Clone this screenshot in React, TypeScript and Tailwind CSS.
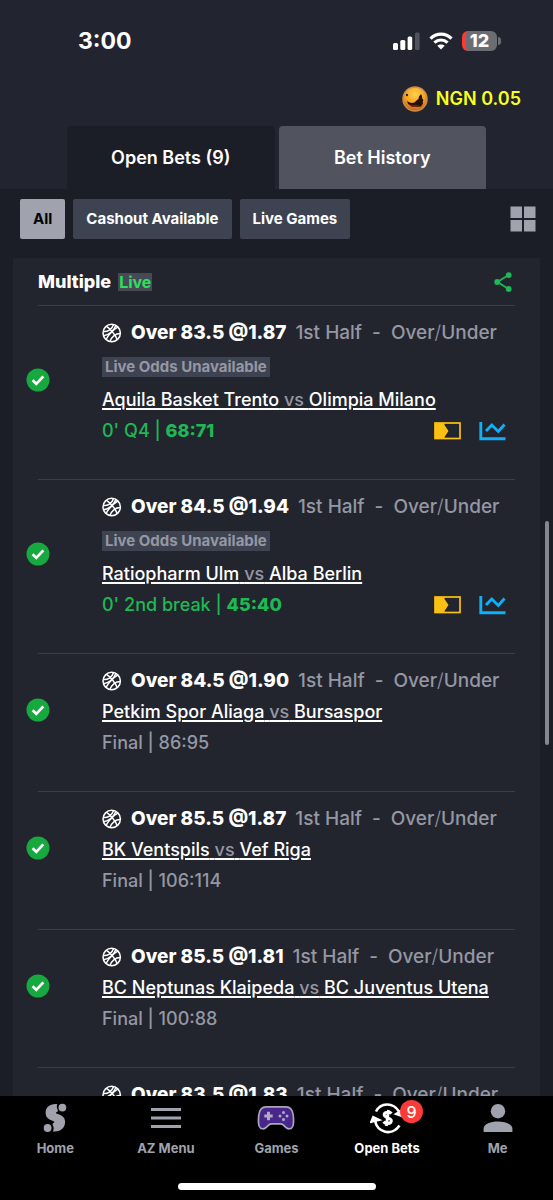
import { Fragment } from 'react';
import type { ReactNode } from 'react';

interface Match {
  home: string;
  away: string;
  status: string;
  score: string;
  live?: boolean;
}

interface Bet {
  pick: string;
  odds: string;
  match?: Match;
}

interface NavItem {
  label: string;
  icon: ReactNode;
  active?: boolean;
  badge?: number;
}

const filters = ['All', 'Cashout Available', 'Live Games'];

const bets: Bet[] = [
  { pick: 'Over 83.5', odds: '1.87', match: { home: 'Aquila Basket Trento', away: 'Olimpia Milano', status: "0' Q4", score: '68:71', live: true } },
  { pick: 'Over 84.5', odds: '1.94', match: { home: 'Ratiopharm Ulm', away: 'Alba Berlin', status: "0' 2nd break", score: '45:40', live: true } },
  { pick: 'Over 84.5', odds: '1.90', match: { home: 'Petkim Spor Aliaga', away: 'Bursaspor', status: 'Final', score: '86:95' } },
  { pick: 'Over 85.5', odds: '1.87', match: { home: 'BK Ventspils', away: 'Vef Riga', status: 'Final', score: '106:114' } },
  { pick: 'Over 85.5', odds: '1.81', match: { home: 'BC Neptunas Klaipeda', away: 'BC Juventus Utena', status: 'Final', score: '100:88' } },
  { pick: 'Over 83.5', odds: '1.83' },
];

function SignalIcon() {
  return (
    <svg width="27" height="18" viewBox="0 0 27 18" fill="#fff">
      <rect x="0" y="11" width="5" height="7" rx="1.5" />
      <rect x="7.3" y="8" width="5" height="10" rx="1.5" />
      <rect x="14.6" y="4.5" width="4.6" height="13.5" rx="1.5" />
      <rect x="22" y="0.5" width="4.6" height="17.5" rx="1.5" fill="#50535b" />
    </svg>
  );
}

function WifiIcon() {
  return (
    <svg width="24" height="18" viewBox="0 0 24 18">
      <g fill="none" stroke="#fff" strokeWidth="3.2">
        <path d="M1.5 6.6C7.4.6 16.6.6 22.5 6.6" />
        <path d="M5.4 10.7C9.2 7.1 14.8 7.1 18.6 10.7" />
      </g>
      <path d="M12 17.6 8.3 13.8C10.4 12 13.6 12 15.7 13.8Z" fill="#fff" />
    </svg>
  );
}

function CoinIcon() {
  return (
    <svg width="26" height="26" viewBox="0 0 26 26">
      <defs>
        <radialGradient id="coin" cx="0.5" cy="0.3" r="0.65">
          <stop offset="0" stopColor="#ffd24a" />
          <stop offset="0.65" stopColor="#f5a01f" />
          <stop offset="1" stopColor="#c46a1c" />
        </radialGradient>
      </defs>
      <circle cx="13" cy="13" r="12" fill="url(#coin)" stroke="#d08a4b" strokeWidth="1.5" />
      <path d="m5 14.500 1.500 1.500 3 1 3-.5 2.500-2.500 1.500-1 .5-2.500 2-2.500 1 2 .2 2.500 1.300 1.500-.8 1.500.3 2-2 3L14 21l-4-.5-4-2.500Z" fill="#241006" />
      <path d="M6.500 18 10 21h4l3.500-1.500-4-.8-3 .3Z" fill="#7a1c0c" />
      <circle cx="5" cy="9" r="1.2" fill="#3a1a08" />
    </svg>
  );
}

function GridIcon() {
  return (
    <svg width="26" height="26" viewBox="0 0 26 26" fill="#a0a2ad">
      <rect x="0.5" y="0.5" width="11.5" height="11.5" />
      <rect x="14" y="0.5" width="11.5" height="11.5" />
      <rect x="0.5" y="14" width="11.5" height="11.5" />
      <rect x="14" y="14" width="11.5" height="11.5" />
    </svg>
  );
}

function ShareIcon() {
  return (
    <svg width="18" height="20" viewBox="0 0 18 20" fill="#1db954">
      <path d="M14.5 3 3.5 10l11 7" fill="none" stroke="#1db954" strokeWidth="1.8" />
      <circle cx="14.7" cy="3.1" r="2.9" />
      <circle cx="3.2" cy="10" r="2.9" />
      <circle cx="14.7" cy="16.9" r="2.9" />
    </svg>
  );
}

function BasketballIcon() {
  return (
    <svg width="20" height="20" viewBox="0 0 20 20" fill="none" stroke="#fff" strokeWidth="1.5" className="shrink-0">
      <circle cx="9.7" cy="10" r="8.7" />
      <path d="M4 16.3C7.500 10.500 11.500 6.500 16.200 3.900" />
      <path d="M4.500 3.300C8 5.500 13.500 11.500 15.300 17" />
      <path d="M1.400 8.500C5.500 9 10 6.500 11.600 1.500" />
      <path d="M1.600 12.800C7 12 11.500 8 14 2.400" />
      <path d="M8 18.500C9.200 14 13.500 10.500 18.400 10.500" />
    </svg>
  );
}

function WonIcon() {
  return (
    <svg width="24" height="24" viewBox="0 0 24 24" className="shrink-0">
      <circle cx="12" cy="12" r="11.5" fill="#17a83f" />
      <path d="m6.600 12.200 3.700 3.700 7-7.600" fill="none" stroke="#fff" strokeWidth="2.700" />
    </svg>
  );
}

function LabelIcon() {
  return (
    <svg width="27" height="18" viewBox="0 0 27 18">
      <rect x="1" y="1" width="25" height="15.5" fill="none" stroke="#fcc012" strokeWidth="1.7" />
      <path d="M1 1h9.500v2l4 6-4 6v1.500H1Z" fill="#fcc012" />
    </svg>
  );
}

function ChartIcon() {
  return (
    <svg width="27" height="20" viewBox="0 0 27 20" fill="none" stroke="#10b0f8" strokeWidth="2.9">
      <path d="M1.800 1v16.700H26.500" />
      <path d="m7 10 5.800-6 6.500 6.500 6.200-7" />
    </svg>
  );
}

function HomeIcon() {
  return (
    <svg width="24" height="30" viewBox="0 0 24 30" fill="#a0a2ad">
      <circle cx="19.4" cy="4.6" r="3.9" />
      <circle cx="4.6" cy="25" r="3.9" />
      <path d="M14.200 1.200C7 .5 2.400 4.500 2.600 10c.2 4.500 3 6.200 6.400 7.600 2.300 1 3.200 1.600 1.800 2.200-1.200.5-1.600 1.500-.8 3 .9 1.700.9 3.800-.1 5.600 7 1 12.200-3.100 12.200-9.300 0-5-3.800-6.700-7.300-8-2.200-.8-2.400-1.500-.9-2.100 1.200-.4 1.200-1.600.6-2.800-.8-1.600-.9-3.500-.3-5Z" />
    </svg>
  );
}

function MenuIcon() {
  return (
    <svg width="30" height="24" viewBox="0 0 30 24" stroke="#a0a2ad" strokeWidth="3.2">
      <path d="M0 3.500h30M0 12h30M0 20.500h30" />
    </svg>
  );
}

function GamepadIcon() {
  return (
    <svg width="38" height="26" viewBox="0 0 38 26">
      <path
        d="M9 1.800H29c4.500 0 6.500 3 7.200 8.200.6 5 .6 8.500-.4 11.200-1.200 3-4.800 3.500-7.300 1l-2.300-2.300c-.8-.8-1.600-1.100-3-1.100h-8.400c-1.400 0-2.200.3-3 1.100l-2.300 2.300c-2.500 2.500-6.100 2-7.300-1-1-2.700-1-6.200-.4-11.200C2.500 4.800 4.500 1.800 9 1.800Z"
        fill="#48268c"
        stroke="#a9a6b8"
        strokeWidth="1.7"
      />
      <path d="M11.500 6.800v8.400M7.300 11h8.400" stroke="#b0adc0" strokeWidth="3" />
      <g fill="#b0adc0">
        <circle cx="26.5" cy="7.5" r="1.5" />
        <circle cx="26.5" cy="14.5" r="1.5" />
        <circle cx="23" cy="11" r="1.5" />
        <circle cx="30" cy="11" r="1.5" />
      </g>
    </svg>
  );
}

function OpenBetsIcon() {
  return (
    <svg width="34" height="32" viewBox="0 0 34 32" fill="none" stroke="#fff">
      <g strokeWidth="2.6">
        <path d="M6 9.500C10.500 1 22.500-.5 29 9.500" />
        <path d="M5 18c1.500 13 17.500 16.500 24.500 5.500" />
      </g>
      <path d="m25 12 7.500-4.500.8 7.500ZM.5 20.500 3 14.500l7.500 3.500Z" fill="#fff" strokeWidth="1.4" />
      <path d="M21.500 11.500c-2-2.300-7.300-1.800-7.300 1.300 0 3.700 7.600 2.500 7.100 6.300-.5 3.200-5.800 3-7.800.6M18.500 8l-2.200 16" strokeWidth="3" />
    </svg>
  );
}

function MeIcon() {
  return (
    <svg width="30" height="30" viewBox="0 0 30 30" fill="#a0a2ad">
      <circle cx="15" cy="8.2" r="7.2" />
      <path d="M.6 29V25.500C.6 21 8 18.500 15 18.500S29.400 21 29.400 25.500V29Z" />
    </svg>
  );
}

const navItems: NavItem[] = [
  { label: 'Home', icon: <HomeIcon /> },
  { label: 'AZ Menu', icon: <MenuIcon /> },
  { label: 'Games', icon: <GamepadIcon /> },
  { label: 'Open Bets', icon: <OpenBetsIcon />, active: true, badge: 9 },
  { label: 'Me', icon: <MeIcon /> },
];

function StatusBar() {
  return (
    <div className="flex h-[82px] items-center justify-between pr-[52px] pl-[78px]">
      <span className="text-[23px] font-bold">3:00</span>
      <div className="flex items-center gap-[9px]">
        <SignalIcon />
        <WifiIcon />
        <div className="flex items-center gap-px">
          <div className="flex h-5 w-[35px] items-center justify-center overflow-hidden rounded-md border-l-4 border-[#fb3b30] bg-[#6b6d74] pr-1 text-lg font-extrabold">
            12
          </div>
          <span className="h-2 w-[3px] rounded-r-full bg-[#6b6d74]" />
        </div>
      </div>
    </div>
  );
}

function MatchDetails({ match }: { match: Match }) {
  return (
    <>
      {match.live && (
        <div className="flex h-[29px] items-center">
          <span className="bg-[#3e4351] px-[3px] text-[15px] leading-5 font-bold text-[#9597a3]">Live Odds Unavailable</span>
        </div>
      )}
      <a href="#match" className="self-start font-medium whitespace-nowrap underline decoration-2 underline-offset-2">
        {match.home} <span className="text-[#9597a3]">vs</span> {match.away}
      </a>
      <div className="flex items-center justify-between">
        {match.live ? (
          <span className="font-medium text-[#1db954]">
            {match.status} | <b className="font-extrabold">{match.score}</b>
          </span>
        ) : (
          <span className="font-medium text-[#9597a3]">
            {match.status} | {match.score}
          </span>
        )}
        {match.live && (
          <div className="flex items-center gap-[18px]">
            <button type="button" aria-label="Cashout">
              <LabelIcon />
            </button>
            <button type="button" aria-label="Statistics">
              <ChartIcon />
            </button>
          </div>
        )}
      </div>
    </>
  );
}

function BetRow({ bet }: { bet: Bet }) {
  return (
    <li className="flex gap-[52px] pt-[15px] pr-[34px] pb-9 pl-[13px]">
      <div className="flex w-6 shrink-0 items-center pb-1">{bet.match && <WonIcon />}</div>
      <div className="flex min-w-0 flex-1 flex-col gap-[7px] text-lg leading-6">
        <div className="flex items-center text-[19px] leading-6 font-medium whitespace-nowrap text-[#9597a3]">
          <BasketballIcon />
          <span className="mx-[9px] font-extrabold text-white">
            {bet.pick} @{bet.odds}
          </span>
          <span>1st Half</span>
          <span className="mx-[10px]">-</span>
          <span>
            Over<span className="font-light">/</span>Under
          </span>
        </div>
        {bet.match && <MatchDetails match={bet.match} />}
      </div>
    </li>
  );
}

export default function App() {
  return (
    <div className="relative flex h-screen flex-col overflow-hidden bg-[#1b1e26] font-['Inter',sans-serif] text-white">
      <header className="shrink-0 bg-[#22252f]">
        <StatusBar />
        <div className="flex h-[34px] items-center justify-end gap-2 pr-8">
          <CoinIcon />
          <span className="text-lg font-semibold text-[#f9ff1c]">NGN 0.05</span>
        </div>
        <div className="flex gap-1 px-[67px] pt-[10px] text-lg font-semibold">
          <button type="button" className="h-[63px] flex-1 rounded-t bg-[#1b1e26]">
            Open Bets (9)
          </button>
          <button type="button" className="h-[63px] flex-1 rounded-t bg-[#51545e]">
            Bet History
          </button>
        </div>
      </header>

      <div className="flex shrink-0 items-center gap-2 pt-[10px] pr-[17px] pb-[19px] pl-5">
        {filters.map((filter, index) => (
          <button
            key={filter}
            type="button"
            className={`h-10 rounded-xs px-[13px] text-[15px] font-bold ${index === 0 ? 'bg-[#a0a2ad] text-black' : 'bg-[#3e4351]'}`}
          >
            {filter}
          </button>
        ))}
        <button type="button" aria-label="Grid view" className="ml-auto">
          <GridIcon />
        </button>
      </div>

      <main className="mx-[13px] min-h-0 flex-1 overflow-hidden bg-[#22252e]">
        <div className="flex h-[47px] items-center justify-between pr-7 pl-[25px]">
          <h2 className="flex items-center gap-[7px] text-lg font-extrabold">
            Multiple
            <span className="bg-[#454a54] px-px text-base leading-[18px] font-bold text-[#2ee05f]">Live</span>
          </h2>
          <button type="button" aria-label="Share">
            <ShareIcon />
          </button>
        </div>
        <ul>
          {bets.map((bet, index) => (
            <Fragment key={index}>
              <li role="separator" className="mx-[25px] h-px bg-[#3a3d45]" />
              <BetRow bet={bet} />
            </Fragment>
          ))}
        </ul>
      </main>

      <div className="absolute top-[521px] right-1 h-56 w-1 rounded-full bg-[#85878e]" />

      <nav className="shrink-0 bg-black pb-[10px]">
        <div className="flex">
          {navItems.map(item => (
            <a
              key={item.label}
              href="#nav"
              className={`flex flex-1 flex-col items-center gap-[2px] pt-1 text-[13px] leading-5 font-bold ${item.active ? 'text-white' : 'text-[#a0a2ad]'}`}
            >
              <span className="relative flex h-9 items-center">
                {item.icon}
                {item.badge && (
                  <span className="absolute top-0 left-[30px] flex size-[23px] items-center justify-center rounded-full bg-[#fb3b38] text-base font-medium text-white">
                    {item.badge}
                  </span>
                )}
              </span>
              {item.label}
            </a>
          ))}
        </div>
        <div className="mx-auto mt-[25px] h-[7px] w-[198px] rounded-full bg-white" />
      </nav>
    </div>
  );
}
